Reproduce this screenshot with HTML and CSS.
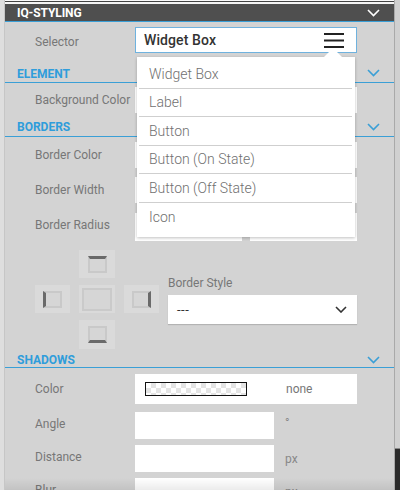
FILE: index.html
```html
<!DOCTYPE html>
<html>
<head>
<meta charset="utf-8">
<link rel="stylesheet" href="styles.css">
</head>
<body>
<div class="edge-left"></div>
<div class="panel">
  <div class="topline"></div>
  <div class="head-main">
    <span>IQ-STYLING</span>
    <svg class="chev" width="13" height="8" viewBox="0 0 13 8"><polyline points="1,1 6.5,6.5 12,1" fill="none" stroke="#fff" stroke-width="1.6"/></svg>
  </div>

  <div class="row row-selector">
    <div class="label">Selector</div>
    <div class="selector">
      <span class="sel-text">Widget Box</span>
      <svg class="burger" width="20" height="15" viewBox="0 0 20 15"><rect x="0" y="0" width="20" height="2" fill="#222"/><rect x="0" y="6.5" width="20" height="2" fill="#222"/><rect x="0" y="13" width="20" height="2" fill="#222"/></svg>
      <div class="menu">
        <div class="caret"></div>
        <div class="item">Widget Box</div>
        <div class="item">Label</div>
        <div class="item">Button</div>
        <div class="item">Button (On State)</div>
        <div class="item">Button (Off State)</div>
        <div class="item last">Icon</div>
      </div>
    </div>
  </div>

  <div class="section sec-element">
    <span>ELEMENT</span>
    <svg class="chev" width="13" height="8" viewBox="0 0 13 8"><polyline points="1,1 6.5,6.5 12,1" fill="none" stroke="#3a9fd6" stroke-width="1.6"/></svg>
  </div>
  <div class="row row-34">
    <div class="label">Background Color</div>
    <div class="input wide"></div>
  </div>

  <div class="section sec-borders">
    <span>BORDERS</span>
    <svg class="chev" width="13" height="8" viewBox="0 0 13 8"><polyline points="1,1 6.5,6.5 12,1" fill="none" stroke="#3a9fd6" stroke-width="1.6"/></svg>
  </div>
  <div class="row row-35">
    <div class="label">Border Color</div>
    <div class="input wide"></div>
  </div>
  <div class="row row-35">
    <div class="label">Border Width</div>
    <div class="input wide"></div>
  </div>
  <div class="row row-35">
    <div class="label">Border Radius</div>
    <div class="pair">
      <div class="input half"></div>
      <div class="input half"></div>
    </div>
  </div>

  <div class="sides-row">
    <div class="sides">
      <div class="side-box pos-top"><div class="sq bar-top"></div></div>
      <div class="side-box pos-left"><div class="sq bar-left"></div></div>
      <div class="side-box pos-center"><div class="sq-big"></div></div>
      <div class="side-box pos-right"><div class="sq bar-right"></div></div>
      <div class="side-box pos-bottom"><div class="sq bar-bottom"></div></div>
    </div>
    <div class="style-block">
      <div class="label">Border Style</div>
      <div class="select">
        <span>---</span>
        <svg width="12" height="7" viewBox="0 0 12 7"><polyline points="1,1 6,6 11,1" fill="none" stroke="#333" stroke-width="1.6"/></svg>
      </div>
    </div>
  </div>

  <div class="section sec-shadows">
    <span>SHADOWS</span>
    <svg class="chev" width="13" height="8" viewBox="0 0 13 8"><polyline points="1,1 6.5,6.5 12,1" fill="none" stroke="#3a9fd6" stroke-width="1.6"/></svg>
  </div>
  <div class="row row-color">
    <div class="label">Color</div>
    <div class="colorbox">
      <div class="swatch"></div>
      <span class="unit-in">none</span>
    </div>
  </div>
  <div class="row row-num">
    <div class="label">Angle</div>
    <div class="input num"></div>
    <span class="unit deg">°</span>
  </div>
  <div class="row row-num">
    <div class="label">Distance</div>
    <div class="input num"></div>
    <span class="unit">px</span>
  </div>
  <div class="row row-num">
    <div class="label">Blur</div>
    <div class="input num"></div>
    <span class="unit">px</span>
  </div>
  <div class="fade"></div>
</div>
<div class="scroll">
  <div class="track"></div>
  <div class="thumb"></div>
</div>
</body>
</html>
```

FILE: styles.css
```css
* { box-sizing: border-box; }
html, body { margin: 0; padding: 0; }
body {
  width: 400px;
  height: 490px;
  overflow: hidden;
  display: flex;
  background: #d3d3d3;
  font-family: Roboto, "Noto Sans", sans-serif;
}
.edge-left {
  width: 5px;
  flex: none;
  background: #dedede;
  border-right: 1px solid #c6c6c6;
}
.panel {
  width: 389px;
  flex: none;
  position: relative;
  background: #d3d3d3;
  display: flex;
  flex-direction: column;
  overflow: hidden;
}
.panel > * { flex-shrink: 0; }
.topline {
  height: 4px;
  background: linear-gradient(#fafafa 0 1px, #444 1px 2px, #f4f4f4 2px);
}
.head-main {
  height: 18px;
  background: #4f4f4f;
  border-bottom: 1px solid #3a9fd6;
  display: flex;
  align-items: center;
  justify-content: space-between;
  padding: 0 14px 0 12px;
  color: #fff;
  font-weight: 700;
  font-size: 12px;
  letter-spacing: -0.1px;
}
.head-main .chev { margin-top: 1px; }
.row {
  display: flex;
  align-items: center;
}
.label {
  color: #777;
  font-size: 12px;
  width: 130px;
  padding-left: 30px;
  flex: none;
}
.row-selector { height: 38px; align-items: flex-start; padding-top: 5px; }
.row-selector .label { padding-top: 8px; }
.selector {
  position: relative;
  width: 222px;
  height: 26px;
  background: #fff;
  border: 1px solid #6fb2de;
  display: flex;
  align-items: center;
  justify-content: space-between;
  padding: 0 12px 0 8px;
}
.sel-text {
  font-size: 14px;
  font-weight: 500;
  color: #333;
  letter-spacing: 0.1px;
}
.burger { margin-top: 1px; }
.menu {
  position: absolute;
  left: 1px;
  top: 29px;
  width: 218px;
  background: #fff;
  box-shadow: 0 1px 3px rgba(0,0,0,0.25);
  padding: 3px 3px 6px 2px;
  z-index: 5;
}
.caret {
  position: absolute;
  right: 13px;
  top: -9px;
  width: 0;
  height: 0;
  border-left: 9px solid transparent;
  border-right: 9px solid transparent;
  border-bottom: 9px solid #fff;
}
.item {
  height: 28.5px;
  border-bottom: 1px solid #cfcfcf;
  font-size: 14px;
  font-weight: 300;
  color: #707070;
  display: flex;
  align-items: center;
  padding-left: 10px;
}
.item.last { border-bottom: none; }
.section {
  display: flex;
  align-items: center;
  justify-content: space-between;
  border-bottom: 1px solid #3a9fd6;
  color: #2f9ddb;
  font-size: 12px;
  font-weight: 700;
  padding: 0 14px 0 12px;
}
.sec-element { height: 23px; padding-top: 5px; }
.sec-borders { height: 20px; padding-top: 1px; }
.sec-shadows { height: 16px; padding-top: 1px; }
.section .chev { margin-top: -1px; }
.row-34 { height: 34px; }
.row-35 { height: 35px; }
.input {
  background: #fff;
  height: 26px;
}
.wide { width: 222px; }
.pair {
  display: flex;
  gap: 8px;
  align-self: flex-end;
  margin-bottom: 1px;
}
.half { width: 107px; height: 28px; }
.sides-row {
  display: flex;
  padding: 8px 0 0 30px;
  height: 110px;
}
.sides {
  display: grid;
  grid-template-columns: 35px 36px 35px;
  grid-template-rows: 28px 28px 29px;
  column-gap: 9px;
  row-gap: 7px;
}
.side-box {
  background: #dadada;
  display: flex;
  align-items: center;
  justify-content: center;
}
.pos-top { grid-column: 2; grid-row: 1; }
.pos-left { grid-column: 1; grid-row: 2; }
.pos-center { grid-column: 2; grid-row: 2; }
.pos-right { grid-column: 3; grid-row: 2; }
.pos-bottom { grid-column: 2; grid-row: 3; }
.sq {
  width: 19px;
  height: 17px;
  border: 2px solid #c9c9c9;
  background: #d6d6d6;
}
.bar-top { border-top: 3px solid #6a6a6a; }
.bar-bottom { border-bottom: 3px solid #6a6a6a; }
.bar-left { border-left: 3px solid #6a6a6a; }
.bar-right { border-right: 3px solid #6a6a6a; }
.sq-big {
  width: 30px;
  height: 23px;
  border: 2px solid #cacaca;
  background: #d6d6d6;
}
.style-block {
  margin-left: 9px;
  padding-top: 26px;
  width: 189px;
}
.style-block .label {
  padding-left: 0;
  width: auto;
  margin-bottom: 5px;
}
.select {
  height: 29px;
  background: #fff;
  display: flex;
  align-items: center;
  justify-content: space-between;
  padding: 0 10px 0 9px;
  font-size: 13px;
  color: #333;
  box-shadow: 0 1px 1px rgba(0,0,0,0.15);
}
.select span { letter-spacing: 0.5px; }
.row-color { height: 41px; }
.colorbox {
  width: 222px;
  height: 30px;
  background: #fff;
  display: flex;
  align-items: center;
  padding-left: 10px;
  margin-top: 1px;
}
.swatch {
  width: 102px;
  height: 14px;
  border: 1px solid #111;
  background-color: #fff;
  background-image:
    linear-gradient(45deg, #e4e4e4 25%, transparent 25%, transparent 75%, #e4e4e4 75%),
    linear-gradient(45deg, #e4e4e4 25%, transparent 25%, transparent 75%, #e4e4e4 75%);
  background-size: 10px 10px;
  background-position: 0 0, 5px 5px;
}
.unit-in {
  margin-left: 39px;
  font-size: 12px;
  color: #777;
}
.row-num { height: 33px; }
.row-num .label { margin-top: -3px; }
.num { width: 139px; height: 27px; }
.unit {
  margin-left: 11px;
  font-size: 12px;
  color: #888;
}
.deg { margin-top: -6px; }
.fade {
  position: absolute;
  left: 0;
  right: 0;
  bottom: 0;
  height: 12px;
  background: linear-gradient(rgba(0,0,0,0), rgba(0,0,0,0.08));
}
.scroll {
  width: 6px;
  flex: none;
  display: flex;
  flex-direction: column;
  border-left: 1px solid #a9a9a9;
}
.track {
  height: 448px;
  background: #d0d0d0;
}
.thumb {
  flex: 1;
  background: #2b2b2b;
  border-top: 1px solid #888;
}
```
